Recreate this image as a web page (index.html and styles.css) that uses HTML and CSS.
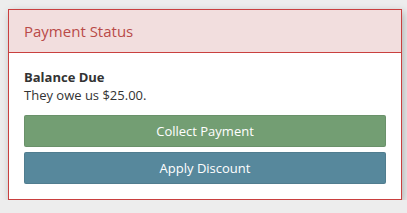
FILE: index.html
```html
<!DOCTYPE html>
<html>
<head>
  <title>Payment Status</title>
  <link rel="stylesheet" href="styles.css">
</head>
<body>
  <div class="panel">
    <div class="panel-heading">Payment Status</div>
    <div class="panel-body">
      <strong>Balance Due</strong>
      <p class="note">They owe us $25.00.</p>
      <button class="btn btn-collect">Collect Payment</button>
      <button class="btn btn-discount">Apply Discount</button>
    </div>
  </div>
</body>
</html>
```

FILE: styles.css
```css
/* payment status panel */
body {
  margin: 0;
  padding: 9px 5px 0 8px;
  background-color: #ededed;
  font-family: "Open Sans", Arial, sans-serif;
  font-size: 13px;
  color: #333;
}

.panel {
  background-color: #fff;
  border: 1px solid #c9403f;
  box-shadow: 2px 3px 8px rgba(0, 0, 0, 0.25);
}

.panel-heading {
  background-color: #f2dede;
  border-bottom: 1px solid #c9403f;
  color: #b94a48;
  font-size: 15px;
  padding: 0 15px;
  height: 42px;
  line-height: 42px;
}

.panel-body {
  padding: 15px 15px 15px 15px;
  line-height: 18px;
}

.panel-body strong {
  display: block;
  font-weight: 700;
}

.note {
  margin: 0 0 11px;
}

.btn {
  display: block;
  width: 100%;
  height: 32px;
  border: 1px solid rgba(0, 0, 0, 0.08);
  border-radius: 2px;
  color: #fff;
  font-family: "Open Sans", Arial, sans-serif;
  font-size: 13px;
  cursor: pointer;
}

.btn + .btn {
  margin-top: 5px;
}

.btn-collect {
  background-color: #739e73;
}

.btn-discount {
  background-color: #57889c;
}
```
